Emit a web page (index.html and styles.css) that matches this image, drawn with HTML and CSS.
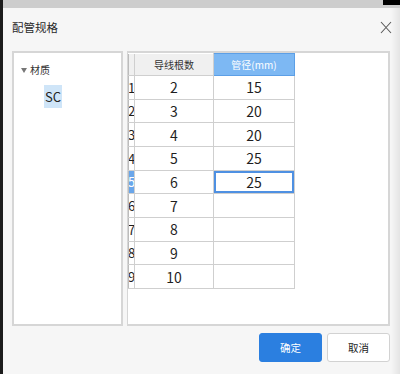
FILE: index.html
```html
<!DOCTYPE html>
<html lang="zh-CN">
<head>
    <meta charset="UTF-8">
    <title>配管规格</title>
    <link rel="stylesheet" href="styles.css">
</head>
<body>
    <div class="dialog">
        <div class="titlebar">
            <span class="title">配管规格</span>
            <span class="close">
                <svg width="12" height="13" viewBox="0 0 12 13">
                    <path d="M1 1 L11 12 M11 1 L1 12" stroke="#5a5a5a" stroke-width="1.1" fill="none"/>
                </svg>
            </span>
        </div>

        <div class="content">
            <div class="tree-panel">
                <div class="tree-node"><span class="caret"></span>材质</div>
                <div class="tree-leaf"><span class="leaf-label">SC</span></div>
            </div>

            <div class="grid-panel">
                <table class="spec-table">
                    <colgroup>
                        <col class="col-index">
                        <col class="col-count">
                        <col class="col-size">
                    </colgroup>
                    <thead>
                        <tr>
                            <th class="corner"></th>
                            <th>导线根数</th>
                            <th class="active-col">管径(mm)</th>
                        </tr>
                    </thead>
                    <tbody>
                        <tr><td class="idx">1</td><td>2</td><td>15</td></tr>
                        <tr><td class="idx">2</td><td>3</td><td>20</td></tr>
                        <tr><td class="idx">3</td><td>4</td><td>20</td></tr>
                        <tr><td class="idx">4</td><td>5</td><td>25</td></tr>
                        <tr><td class="idx current">5</td><td>6</td><td class="selected">25</td></tr>
                        <tr><td class="idx">6</td><td>7</td><td></td></tr>
                        <tr><td class="idx">7</td><td>8</td><td></td></tr>
                        <tr><td class="idx">8</td><td>9</td><td></td></tr>
                        <tr><td class="idx">9</td><td>10</td><td></td></tr>
                    </tbody>
                </table>
            </div>
        </div>

        <div class="footer">
            <button class="btn btn-primary">确定</button>
            <button class="btn">取消</button>
        </div>
    </div>
</body>
</html>
```

FILE: styles.css
```css
* {
    box-sizing: border-box;
    margin: 0;
    padding: 0;
}

body {
    width: 400px;
    height: 374px;
    overflow: hidden;
    font-family: "Noto Sans CJK SC", "Noto Sans", sans-serif;
    color: #222;
    background:
        linear-gradient(#000, #000) right top / 17px 5px no-repeat,
        linear-gradient(#1c1c1c, #1c1c1c) left top / 3px 100% no-repeat,
        #cdcdcd;
}

.dialog {
    margin: 8px 0 0 3px;
    height: 366px;
    background: linear-gradient(to right, #f6f6f6 calc(100% - 9px), #e4e4e4);
    padding: 0 10px 0 9px;
    display: flex;
    flex-direction: column;
}

.titlebar {
    height: 43px;
    display: flex;
    align-items: flex-start;
    justify-content: space-between;
    padding-top: 9px;
}

.title {
    font-size: 11.5px;
    line-height: 20px;
    color: #2a2a2a;
}

.close {
    display: flex;
    margin-top: 4px;
    margin-right: -2px;
}

.content {
    display: flex;
    gap: 4px;
    height: 275px;
}

.tree-panel {
    width: 111px;
    background: #fff;
    border: 2px solid #d6d6d6;
    padding-top: 9px;
}

.tree-node {
    display: flex;
    align-items: center;
    font-size: 10px;
    line-height: 16px;
    color: #333;
    padding-left: 7px;
}

.caret {
    width: 0;
    height: 0;
    border-left: 3px solid transparent;
    border-right: 3px solid transparent;
    border-top: 5px solid #777;
    margin-right: 3px;
}

.tree-leaf {
    padding: 5px 0 0 30px;
}

.leaf-label {
    display: inline-block;
    width: 18px;
    text-align: center;
    background: #cfe5f8;
    font-family: "Liberation Sans Narrow", "Noto Sans CJK SC", sans-serif;
    font-size: 13px;
    line-height: 23px;
    color: #222;
}

.grid-panel {
    flex: 1;
    background: #fff;
    border: 2px solid #d6d6d6;
    border-left-width: 1px;
}

.spec-table {
    border-collapse: collapse;
    table-layout: fixed;
    width: 166px;
    font-family: "Liberation Sans Narrow", "Noto Sans CJK SC", sans-serif;
    font-size: 14px;
    color: #1f1f1f;
}

.col-index {
    width: 6px;
}

.col-count {
    width: 79px;
}

.col-size {
    width: 81px;
}

.spec-table th {
    height: 22px;
    font-family: "Noto Sans CJK SC", sans-serif;
    font-weight: normal;
    font-size: 10px;
    background: #f0f0f0;
    border: 1px solid #cfcfcf;
    border-top: none;
    color: #333;
}

.spec-table th.corner {
    border-left: 1px solid #bcbcbc;
}

.spec-table th.active-col {
    background: #7db8f3;
    border: 1px solid #5c9fe6;
    color: #fff;
}

.spec-table td {
    height: 23.67px;
    text-align: center;
    border: 1px solid #cfcfcf;
    padding: 0;
}

.spec-table td.idx {
    text-align: left;
    overflow: hidden;
    white-space: nowrap;
    font-size: 13px;
    border-left: 1px solid #bcbcbc;
    text-indent: -1px;
}

.spec-table td.current {
    background: #6aa6ea;
    color: #fff;
}

.spec-table td.selected {
    box-shadow: inset 0 0 0 2px #4e90e2;
}

.footer {
    display: flex;
    justify-content: flex-end;
    gap: 5px;
    padding-top: 7px;
}

.btn {
    width: 63px;
    height: 29px;
    font-family: "Noto Sans CJK SC", sans-serif;
    font-size: 10.5px;
    border-radius: 3px;
    border: 1px solid #d2d2d2;
    background: #fff;
    color: #222;
}

.btn-primary {
    background: #2b7fe0;
    border-color: #2b7fe0;
    color: #fff;
}
```
